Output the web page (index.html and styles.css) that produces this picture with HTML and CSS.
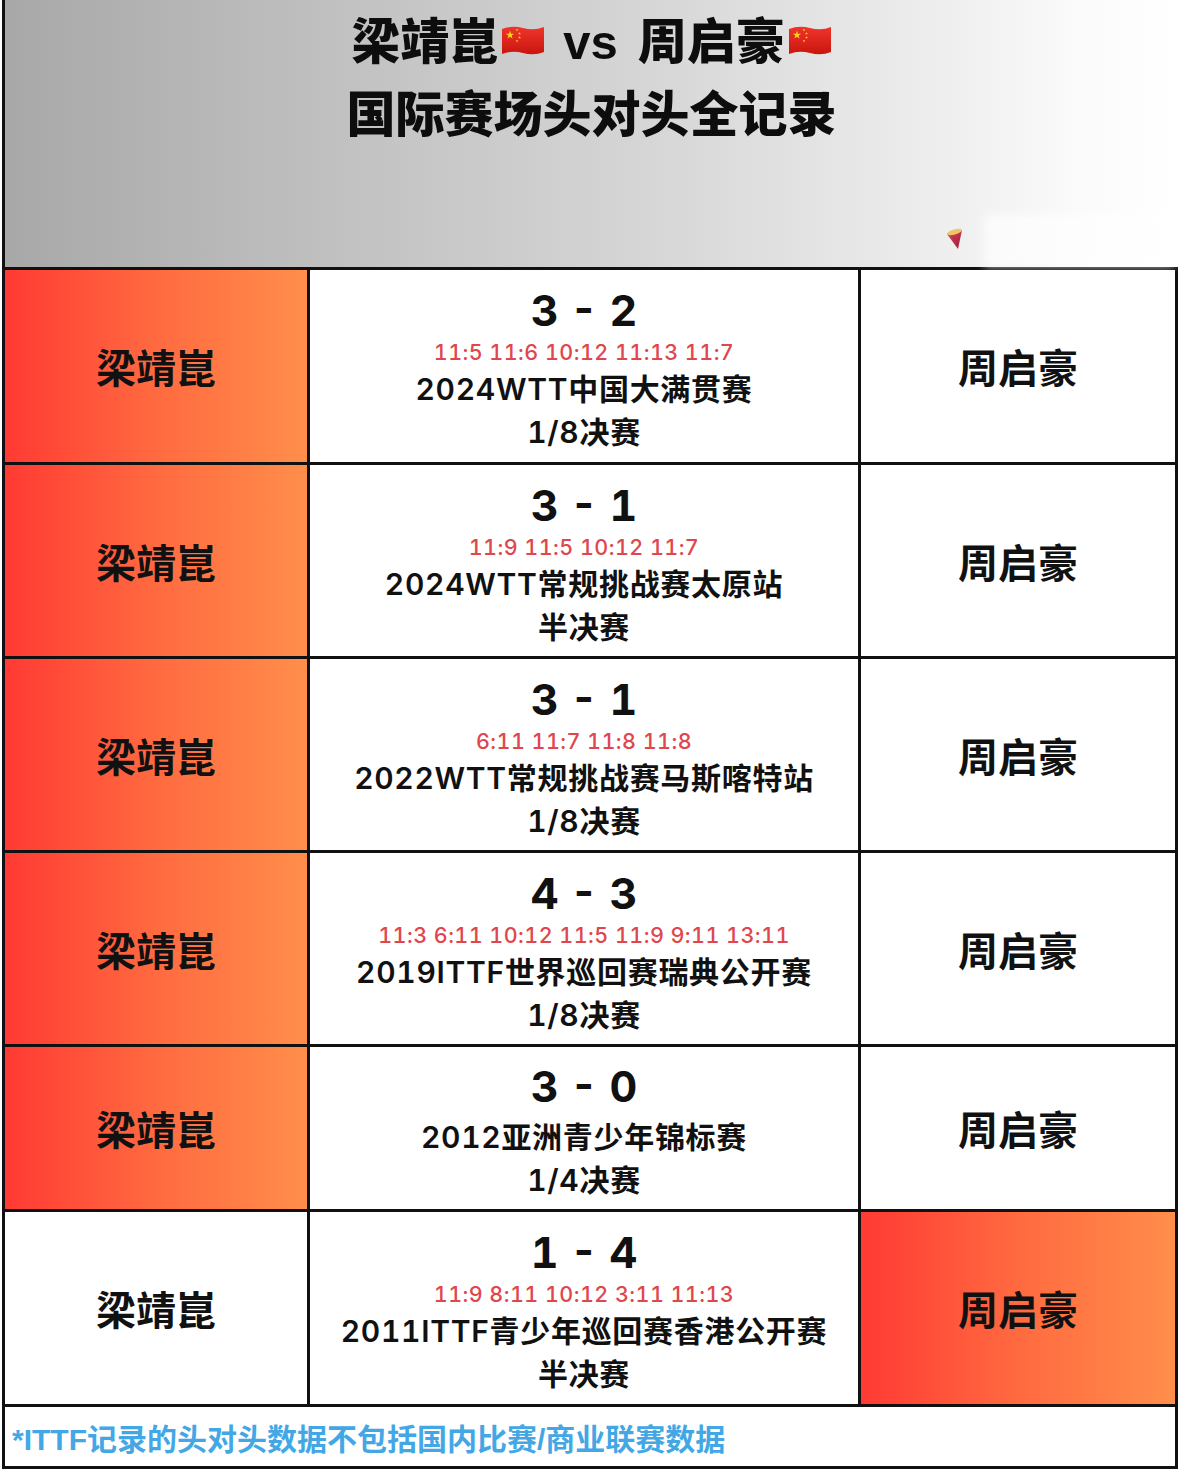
FILE: index.html
```html
<!DOCTYPE html>
<html lang="zh-CN">
<head>
<meta charset="utf-8">
<title>梁靖崑 vs 周启豪 国际赛场头对头全记录</title>
<link rel="stylesheet" href="styles.css">
</head>
<body>
<div class="page">
  <header class="header">
    <h1 class="title">
      <span class="line">梁靖崑<svg class="flag" viewBox="0 0 44 31" width="44" height="31"><defs><linearGradient id="fg1" x1="0" y1="0" x2="0" y2="1"><stop offset="0" stop-color="#f0352a"/><stop offset="1" stop-color="#c8150f"/></linearGradient></defs><path d="M1 4 Q11 0 22 3 T43 2 V27 Q33 31 22 28 T1 29 Z" fill="url(#fg1)"/><polygon transform="translate(9 10) scale(4.4)" fill="#ffd21f" points="0,-1 0.2245,-0.309 0.951,-0.309 0.363,0.118 0.588,0.809 0,0.382 -0.588,0.809 -0.363,0.118 -0.951,-0.309 -0.2245,-0.309"/><polygon transform="translate(16 5) scale(1.5)" fill="#ffd21f" points="0,-1 0.2245,-0.309 0.951,-0.309 0.363,0.118 0.588,0.809 0,0.382 -0.588,0.809 -0.363,0.118 -0.951,-0.309 -0.2245,-0.309"/><polygon transform="translate(18.5 8.5) scale(1.5)" fill="#ffd21f" points="0,-1 0.2245,-0.309 0.951,-0.309 0.363,0.118 0.588,0.809 0,0.382 -0.588,0.809 -0.363,0.118 -0.951,-0.309 -0.2245,-0.309"/><polygon transform="translate(18.5 12.5) scale(1.5)" fill="#ffd21f" points="0,-1 0.2245,-0.309 0.951,-0.309 0.363,0.118 0.588,0.809 0,0.382 -0.588,0.809 -0.363,0.118 -0.951,-0.309 -0.2245,-0.309"/><polygon transform="translate(16 16) scale(1.5)" fill="#ffd21f" points="0,-1 0.2245,-0.309 0.951,-0.309 0.363,0.118 0.588,0.809 0,0.382 -0.588,0.809 -0.363,0.118 -0.951,-0.309 -0.2245,-0.309"/></svg><span class="vs">vs</span>周启豪<svg class="flag" viewBox="0 0 44 31" width="44" height="31"><defs><linearGradient id="fg2" x1="0" y1="0" x2="0" y2="1"><stop offset="0" stop-color="#f0352a"/><stop offset="1" stop-color="#c8150f"/></linearGradient></defs><path d="M1 4 Q11 0 22 3 T43 2 V27 Q33 31 22 28 T1 29 Z" fill="url(#fg2)"/><polygon transform="translate(9 10) scale(4.4)" fill="#ffd21f" points="0,-1 0.2245,-0.309 0.951,-0.309 0.363,0.118 0.588,0.809 0,0.382 -0.588,0.809 -0.363,0.118 -0.951,-0.309 -0.2245,-0.309"/><polygon transform="translate(16 5) scale(1.5)" fill="#ffd21f" points="0,-1 0.2245,-0.309 0.951,-0.309 0.363,0.118 0.588,0.809 0,0.382 -0.588,0.809 -0.363,0.118 -0.951,-0.309 -0.2245,-0.309"/><polygon transform="translate(18.5 8.5) scale(1.5)" fill="#ffd21f" points="0,-1 0.2245,-0.309 0.951,-0.309 0.363,0.118 0.588,0.809 0,0.382 -0.588,0.809 -0.363,0.118 -0.951,-0.309 -0.2245,-0.309"/><polygon transform="translate(18.5 12.5) scale(1.5)" fill="#ffd21f" points="0,-1 0.2245,-0.309 0.951,-0.309 0.363,0.118 0.588,0.809 0,0.382 -0.588,0.809 -0.363,0.118 -0.951,-0.309 -0.2245,-0.309"/><polygon transform="translate(16 16) scale(1.5)" fill="#ffd21f" points="0,-1 0.2245,-0.309 0.951,-0.309 0.363,0.118 0.588,0.809 0,0.382 -0.588,0.809 -0.363,0.118 -0.951,-0.309 -0.2245,-0.309"/></svg></span>
      <span class="line">国际赛场头对头全记录</span>
    </h1>
    <div class="haze"></div>
    <svg class="cone" viewBox="0 0 18 24" width="18" height="24"><defs><linearGradient id="cg" x1="0" y1="0" x2="1" y2="1"><stop offset="0" stop-color="#d8455a"/><stop offset="1" stop-color="#9c1c3a"/></linearGradient></defs><path d="M1 7 L16 3 L12 22 Z" fill="url(#cg)"/><ellipse cx="8.5" cy="5" rx="7.8" ry="2.6" transform="rotate(-15 8.5 5)" fill="#f1c469"/></svg>
  </header>

  <div class="table">
    <div class="cell name win">梁靖崑</div>
    <div class="cell match">
      <div class="score">3 - 2</div>
      <div class="games">11:5 11:6 10:12 11:13 11:7</div>
      <div class="event">2024WTT中国大满贯赛</div>
      <div class="stage">1/8决赛</div>
    </div>
    <div class="cell name">周启豪</div>

    <div class="cell name win">梁靖崑</div>
    <div class="cell match">
      <div class="score">3 - 1</div>
      <div class="games">11:9 11:5 10:12 11:7</div>
      <div class="event">2024WTT常规挑战赛太原站</div>
      <div class="stage">半决赛</div>
    </div>
    <div class="cell name">周启豪</div>

    <div class="cell name win">梁靖崑</div>
    <div class="cell match">
      <div class="score">3 - 1</div>
      <div class="games">6:11 11:7 11:8 11:8</div>
      <div class="event">2022WTT常规挑战赛马斯喀特站</div>
      <div class="stage">1/8决赛</div>
    </div>
    <div class="cell name">周启豪</div>

    <div class="cell name win">梁靖崑</div>
    <div class="cell match">
      <div class="score">4 - 3</div>
      <div class="games">11:3 6:11 10:12 11:5 11:9 9:11 13:11</div>
      <div class="event">2019ITTF世界巡回赛瑞典公开赛</div>
      <div class="stage">1/8决赛</div>
    </div>
    <div class="cell name">周启豪</div>

    <div class="cell name win">梁靖崑</div>
    <div class="cell match">
      <div class="score">3 - 0</div>
      <div class="event event-gap">2012亚洲青少年锦标赛</div>
      <div class="stage">1/4决赛</div>
    </div>
    <div class="cell name">周启豪</div>

    <div class="cell name">梁靖崑</div>
    <div class="cell match">
      <div class="score">1 - 4</div>
      <div class="games">11:9 8:11 10:12 3:11 11:13</div>
      <div class="event">2011ITTF青少年巡回赛香港公开赛</div>
      <div class="stage">半决赛</div>
    </div>
    <div class="cell name win">周启豪</div>

    <div class="cell note">*ITTF记录的头对头数据不包括国内比赛/商业联赛数据</div>
  </div>
</div>
</body>
</html>
```

FILE: styles.css
```css
html, body {
  margin: 0;
  padding: 0;
  background: #ffffff;
}

body {
  font-family: Inter, "Noto Sans CJK SC", sans-serif;
  font-variant-numeric: tabular-nums;
  color: #111111;
}

.page {
  width: 1176px;
  margin-left: 2px;
}

.header {
  position: relative;
  height: 270px;
  box-sizing: border-box;
  border-left: 3px solid #111111;
  border-bottom: 3px solid #111111;
  background: linear-gradient(90deg, #a8a8a8 0%, #c2c2c2 30%, #d6d6d6 55%, #ececec 78%, #fbfbfb 92%, #ffffff 100%);
}

.title {
  margin: 0;
  padding-top: 6px;
  display: flex;
  flex-direction: column;
  align-items: center;
  font-family: "Liberation Sans", "Noto Sans CJK SC", sans-serif;
  font-variant-numeric: normal;
  font-weight: 900;
  font-size: 49px;
  line-height: 73px;
  color: #0d0d0d;
}

.line {
  display: flex;
  align-items: center;
  white-space: nowrap;
}

.flag {
  width: 44px;
  height: 31px;
  margin-left: 3px;
  margin-top: -4px;
}

.vs {
  margin: 0 20px 0 18px;
}

.haze {
  position: absolute;
  right: 4px;
  bottom: 0;
  width: 190px;
  height: 52px;
  background: #ffffff;
  filter: blur(4px);
  opacity: 0.7;
}

.cone {
  position: absolute;
  left: 941px;
  top: 227px;
}

.table {
  display: grid;
  grid-template-columns: 302px 548px 314px;
  grid-template-rows: 192px 191px 191px 191px 162px 192px 59px;
  gap: 3px;
  background: #111111;
  border-left: 3px solid #111111;
  border-right: 3px solid #111111;
  border-bottom: 3px solid #111111;
}

.cell {
  background: #ffffff;
  display: flex;
  align-items: center;
  justify-content: center;
  text-align: center;
}

.win {
  background: linear-gradient(90deg, #ff3a34 0%, #ff6a40 50%, #ff8e4b 100%);
}

.name {
  font-family: "Noto Sans CJK SC", sans-serif;
  font-weight: 700;
  font-size: 40px;
  color: #111111;
}

.match {
  flex-direction: column;
  padding-top: 10px;
  box-sizing: border-box;
}

.score {
  font-weight: 700;
  font-size: 43px;
  line-height: 48px;
  white-space: pre;
}

.games {
  font-weight: 500;
  font-size: 21.5px;
  letter-spacing: 0.45px;
  line-height: 36px;
  color: #e0474d;
}

.event {
  font-weight: 600;
  font-size: 30px;
  letter-spacing: 0.7px;
  line-height: 38px;
  white-space: nowrap;
}

.event-gap {
  margin-top: 8px;
}

.stage {
  font-weight: 600;
  font-size: 30px;
  letter-spacing: 0.7px;
  line-height: 48px;
}

.note {
  grid-column: 1 / -1;
  justify-content: flex-start;
  padding-left: 7px;
  font-family: "Liberation Sans", "Noto Sans CJK SC", sans-serif;
  font-variant-numeric: normal;
  font-weight: 700;
  font-size: 30px;
  color: #43a7e6;
}
```
